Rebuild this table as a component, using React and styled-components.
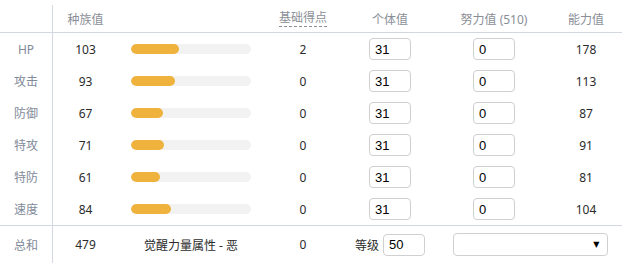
import React from 'react';
import styled, { createGlobalStyle } from 'styled-components';

const GlobalStyle = createGlobalStyle`
  body {
    margin: 0;
    background: #ffffff;
    font-family: "Noto Sans", "Noto Sans CJK SC", sans-serif;
    font-size: 12px;
    color: #333333;
  }
`;

const Table = styled.div`
  width: 622px;
  padding-top: 5px;
`;

const Row = styled.div`
  display: grid;
  grid-template-columns: 53px 65px 146px 78px 96px 112px 72px;
  height: ${(p) => p.$h || 32}px;
  border-bottom: ${(p) => (p.$line ? '1px solid #d3d8e0' : 'none')};
  border-top: ${(p) => (p.$topLine ? '1px solid #d3d8e0' : 'none')};
`;

const Cell = styled.div`
  display: flex;
  align-items: center;
  justify-content: center;
  grid-column: ${(p) => p.$span || 'auto'};
  color: #2b2b2b;
  gap: 4px;
`;

const LabelCell = styled(Cell)`
  border-right: 1px solid #d3d8e0;
  color: #7f8a99;
`;

const HeadCell = styled(Cell)`
  color: #8a8e96;
`;

const Dashed = styled.span`
  border-bottom: 1px dashed #8a8e96;
  line-height: 16px;
`;

const Track = styled.div`
  width: 120px;
  height: 10px;
  border-radius: 5px;
  background: #f2f2f2;
  overflow: hidden;
`;

const Fill = styled.div`
  height: 100%;
  border-radius: 5px;
  background: #efb33d;
`;

const Input = styled.input`
  box-sizing: border-box;
  width: 42px;
  height: 22px;
  border: 1px solid #d0d0d0;
  border-radius: 4px;
  padding: 0 5px;
  font-family: "Liberation Sans", Arial, sans-serif;
  font-size: 13px;
  color: #000000;
  outline: none;
`;

const SelectBox = styled.div`
  box-sizing: border-box;
  width: 155px;
  height: 23px;
  border: 1px solid #d0d0d0;
  border-radius: 4px;
  display: flex;
  align-items: center;
  justify-content: flex-end;
  padding-right: 7px;
  font-size: 8px;
  color: #000000;
  font-family: "DejaVu Sans", sans-serif;
`;

const stats = [
  { name: 'HP', base: 103, bp: 2, stat: 178 },
  { name: '攻击', base: 93, bp: 0, stat: 113 },
  { name: '防御', base: 67, bp: 0, stat: 87 },
  { name: '特攻', base: 71, bp: 0, stat: 91 },
  { name: '特防', base: 61, bp: 0, stat: 81 },
  { name: '速度', base: 84, bp: 0, stat: 104 },
];

const App = () => (
  <>
    <GlobalStyle />
    <Table>
      <Row $h={27} $line>
        <LabelCell />
        <HeadCell>种族值</HeadCell>
        <HeadCell />
        <HeadCell><Dashed>基础得点</Dashed></HeadCell>
        <HeadCell>个体值</HeadCell>
        <HeadCell>努力值 (510)</HeadCell>
        <HeadCell>能力值</HeadCell>
      </Row>
      {stats.map((s) => (
        <Row key={s.name}>
          <LabelCell>{s.name}</LabelCell>
          <Cell>{s.base}</Cell>
          <Cell>
            <Track>
              <Fill style={{ width: `${(s.base / 255) * 120}px` }} />
            </Track>
          </Cell>
          <Cell>{s.bp}</Cell>
          <Cell><Input defaultValue="31" /></Cell>
          <Cell><Input defaultValue="0" /></Cell>
          <Cell>{s.stat}</Cell>
        </Row>
      ))}
      <Row $h={37} $topLine>
        <LabelCell>总和</LabelCell>
        <Cell>479</Cell>
        <Cell>觉醒力量属性 - 恶</Cell>
        <Cell>0</Cell>
        <Cell>
          等级
          <Input defaultValue="50" />
        </Cell>
        <Cell $span="span 2">
          <SelectBox>▼</SelectBox>
        </Cell>
      </Row>
    </Table>
  </>
);

export default App;
